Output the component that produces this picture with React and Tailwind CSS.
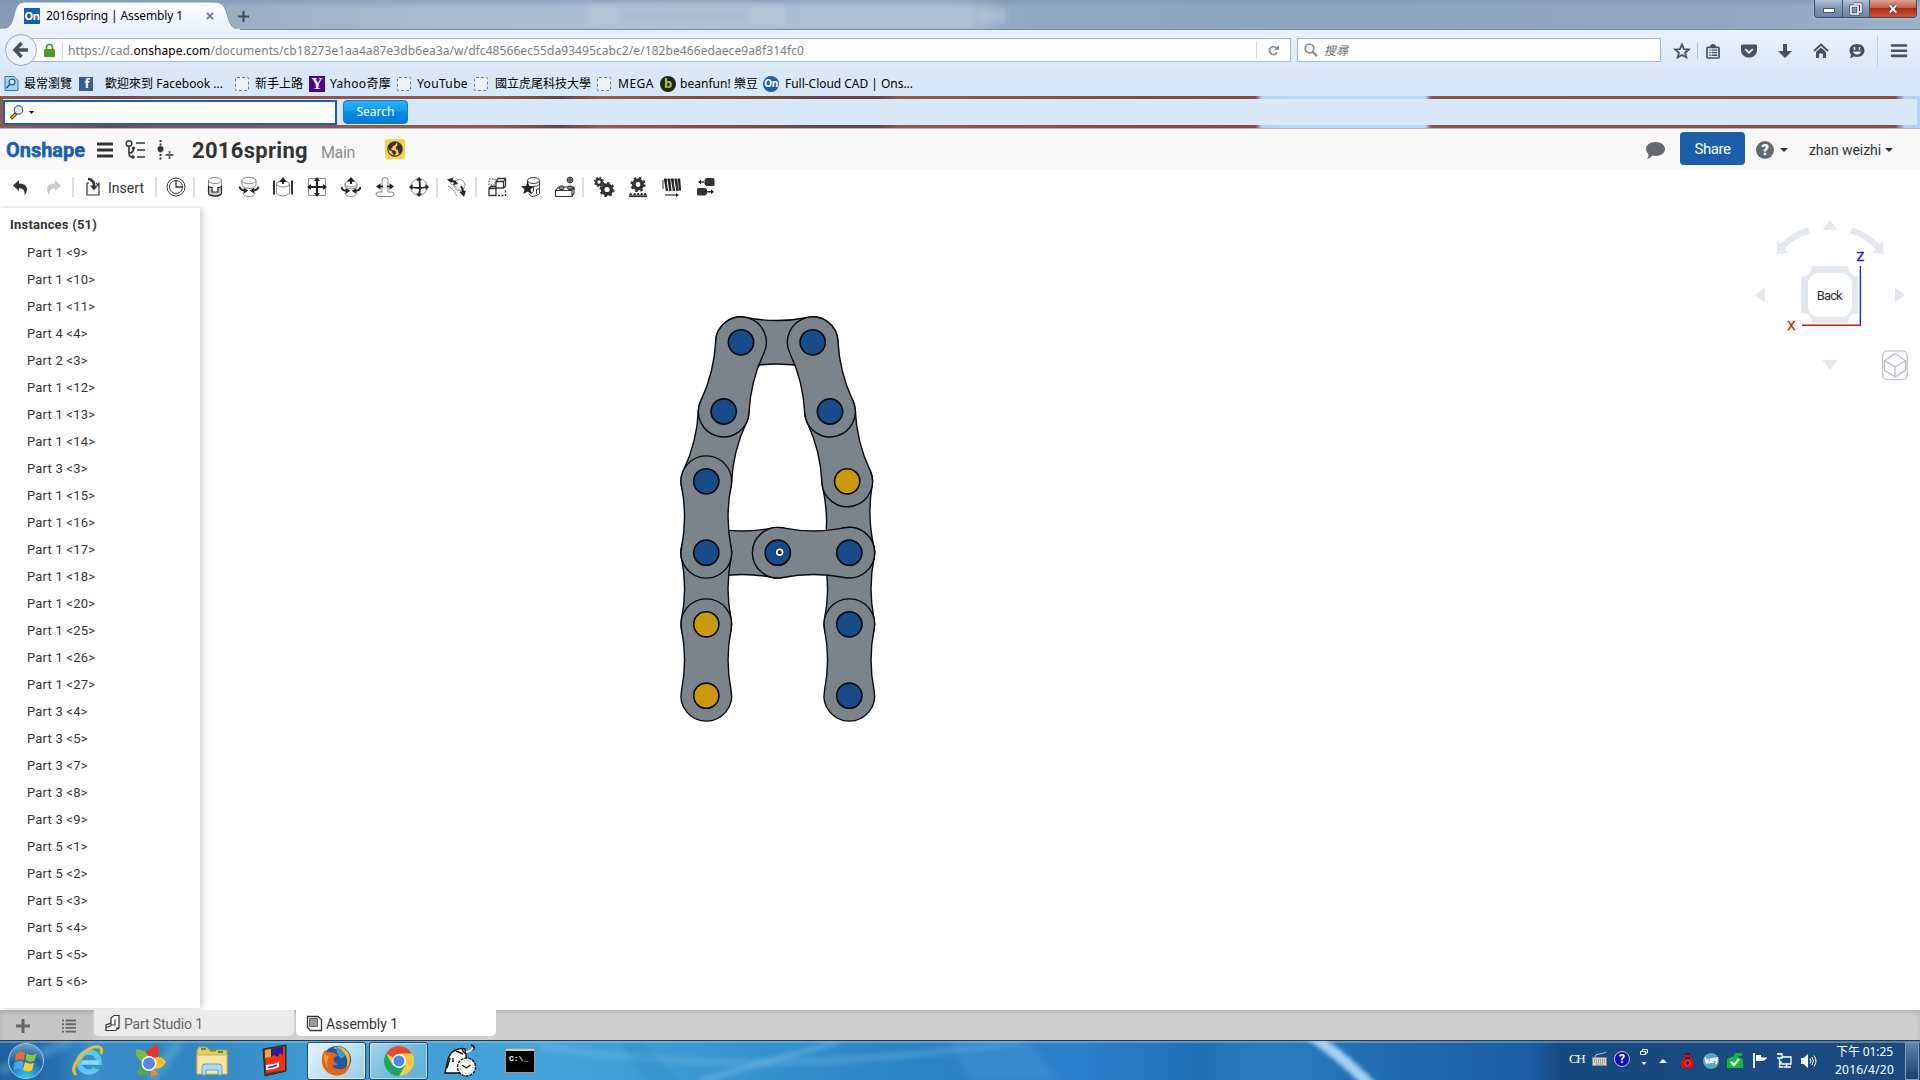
import React, { useLayoutEffect, useRef } from "react";

/* Text set to the width of its box by adjusting the tracking. */
function Fit({ children, className = "" }) {
  const box = useRef(null);
  const inner = useRef(null);
  useLayoutEffect(() => {
    const t = inner.current;
    t.style.letterSpacing = "0px";
    const natural = t.getBoundingClientRect().width;
    const target = box.current.getBoundingClientRect().width;
    t.style.letterSpacing = (target - natural) / Math.max(1, t.textContent.length) + "px";
  }, []);
  return (
    <span ref={box} className={"block shrink-0 whitespace-nowrap " + className}>
      <span ref={inner} className="inline-block">{children}</span>
    </span>
  );
}

const Ico = ({ children, className = "size-5", box = "0 0 20 20" }) => (
  <svg viewBox={box} className={"shrink-0 overflow-visible " + className} fill="none" stroke="#333" strokeWidth="1">
    {children}
  </svg>
);

const Caret = ({ className = "" }) => (
  <svg viewBox="0 0 8 4" className={"h-1 w-2 shrink-0 " + className}><path d="M0 0h8L4 4z" fill="#333" /></svg>
);

/* ---------- browser chrome ---------- */

function TabStrip() {
  return (
    <div className="relative flex h-[30px] w-full bg-[linear-gradient(90deg,#8599b5_0,#9aadc4_230px,#a9bbce_420px,#aebfd2_700px,#a9bcd0_970px,#93a8c2_1000px,#8ea5c0_1250px,#93a6bf_1700px,#9cb0c8_1920px)]">
      <div className="absolute inset-x-0 top-0 h-2 bg-gradient-to-b from-[#7d95b3]/60 to-transparent" />
      <div className="absolute left-[585px] top-1 h-6 w-[200px] rounded-t bg-[#b5c6d8]/60 blur-[2px]" />
      <div className="absolute left-[620px] top-2.5 h-3 w-[128px] bg-[#94a8bd]/30 blur-[4px]" />
      <div className="absolute left-[800px] top-1 h-6 w-[175px] rounded-t bg-[#b2c4d7]/40 blur-[2px]" />
      <div className="absolute left-[978px] top-2 h-4 w-7 bg-[#b9cbe0]/50 blur-[3px]" />
      <div className="absolute inset-x-0 bottom-0 h-px bg-[#6f8ba8]" />
      <svg viewBox="0 0 240 30" className="absolute left-0 top-0 h-[30px] w-[240px]">
        <defs>
          <linearGradient id="tabfill" x1="0" y1="0" x2="0" y2="1"><stop offset="0" stopColor="#fbfdff" /><stop offset="1" stopColor="#eaf2fc" /></linearGradient>
        </defs>
        <path d="M0 29C10 29 12 24 14.500 13C17 4 19 2 27 2H213C222 2 224 5 227 14C230 25 232 29.500 240 29.500V30H0z" fill="url(#tabfill)" stroke="#7d94ad" />
        <path d="M0 29.600H240" stroke="#eaf2fc" strokeWidth="1.500" />
      </svg>
      <div className="relative flex h-full items-center pt-[2px] [font-family:'Noto_Sans',sans-serif]">
        <div className="ml-6 flex size-4 items-center justify-center bg-[#1b5faa] text-[11px] font-bold tracking-tighter text-white">On</div>
        <Fit className="ml-1.5 w-[137px] text-[12px] text-black">2016spring | Assembly 1</Fit>
        <Ico className="ml-[23px] size-2" box="0 0 8 8"><path d="M1 1l6 6M7 1L1 7" stroke="#7b8794" strokeWidth="2.200" /></Ico>
        <Ico className="ml-[24px] size-[11px]" box="0 0 11 11"><path d="M5.500 0v11M0 5.500h11" stroke="#3f4a57" strokeWidth="2" /></Ico>
      </div>
      <div className="relative ml-auto mr-[3px] flex h-[18px] w-[103px] overflow-hidden rounded-b-[4px] border border-t-0 border-[#35455c] shadow-[0_0_2px_#e8f0f8]">
        <div className="flex w-[28px] items-end justify-center border-r border-[#44546b] bg-gradient-to-b from-[#b3c3d6] via-[#8296b1] to-[#6d86a5] pb-[4px]">
          <div className="h-[5px] w-[12px] border border-[#46566d] bg-white" />
        </div>
        <div className="flex w-[27px] items-center justify-center border-r border-[#44546b] bg-gradient-to-b from-[#b3c3d6] via-[#8296b1] to-[#6d86a5]">
          <Ico className="h-3 w-3" box="0 0 12 12"><path d="M4 1h7v8H9M1 3h7v8H1z" stroke="#3c4b61" strokeWidth="3" /><path d="M4 1h7v8H9M1 3h7v8H1z" stroke="#fff" strokeWidth="1.600" /></Ico>
        </div>
        <div className="flex flex-1 items-center justify-center bg-[linear-gradient(#dba295,#c55f49_45%,#ae2a12_50%,#d0583a)]">
          <Ico className="size-[10px]" box="0 0 11 11"><path d="M2 1.500l7 8M9 1.500l-7 8" stroke="#5e2c25" strokeWidth="4" /><path d="M2 1.500l7 8M9 1.500l-7 8" stroke="#fff" strokeWidth="2.400" /></Ico>
        </div>
      </div>
    </div>
  );
}

function NavBar() {
  const g = "#46525e";
  return (
    <div className="flex h-[40px] w-full items-center pt-[2px] [font-family:'Noto_Sans','Noto_Sans_CJK_TC',sans-serif]">
      <div className="z-10 -mt-[2px] ml-[5px] flex size-8 shrink-0 items-center justify-center rounded-full border border-[#94a9c0] bg-[#edf3fb]">
        <Ico className="size-4" box="0 0 16 16"><path d="M8.500 1L2 8l6.500 7M2.500 8H15" stroke="#46525e" strokeWidth="3.400" /></Ico>
      </div>
      <div className="-ml-[6px] -mt-[2px] flex h-6 w-[1260px] items-center border border-[#a5b9cd] bg-white">
        <Ico className="ml-[12px] h-[13px] w-[11px]" box="0 0 11 13"><rect x="0" y="5" width="11" height="8" rx="1" fill="#4b9b1f" stroke="none" /><path d="M2.500 6V3.500a3 3 0 016 0V6" stroke="#4b9b1f" strokeWidth="1.700" /></Ico>
        <div className="ml-[7px] h-[17px] w-px bg-[#d5d9de]" />
        <Fit className="ml-[5px] w-[736px] pt-[2px] text-[12px] text-[#7d7d7d]">https://cad.<span className="text-black">onshape.com</span>/documents/cb18273e1aa4a87e3db6ea3a/w/dfc48566ec55da93495cabc2/e/182be466edaece9a8f314fc0</Fit>
        <div className="ml-auto h-[18px] w-px bg-[#cfd6de]" />
        <Ico className="ml-[11px] mr-[11px] size-[11px]" box="0 0 11 11"><path d="M8.500 3A4 4 0 105.500 9.600 4 4 0 009 7.500" stroke="#8793a0" strokeWidth="1.800" /><path d="M11 0v5H6z" fill="#8793a0" stroke="none" /></Ico>
      </div>
      <div className="-mt-[2px] ml-[6px] flex h-6 w-[364px] items-center border border-[#a5b9cd] bg-white">
        <Ico className="ml-[6px] size-[14px]" box="0 0 14 14"><circle cx="5.500" cy="5.500" r="4.300" stroke="#909090" strokeWidth="1.800" /><path d="M8.800 8.800L13 13.300" stroke="#909090" strokeWidth="2.400" /></Ico>
        <Fit className="ml-[6px] w-[24px] pt-px text-[12px] italic text-[#6e6e6e]">搜尋</Fit>
      </div>
      <Ico className="ml-[13px] size-4" box="0 0 16 16"><path d="M8 1.500l2 4.600 4.800.4-3.700 3.200 1.200 4.800L8 12l-4.300 2.500 1.200-4.800L1.200 6.500 6 6.100z" stroke={g} strokeWidth="1.800" /></Ico>
      <div className="ml-[7px] h-4 w-px bg-[#b4c2d1]" />
      <Ico className="ml-[8px] h-[15px] w-[14px]" box="0 0 15 15"><rect x="1" y="3" width="13" height="11.500" rx="1" stroke={g} strokeWidth="1.800" /><path d="M4.500 3a3 3 0 016 0" fill={g} stroke={g} /><path d="M3.500 6h1.500M6 6h6M3.500 8.800h1.500M6 8.800h6M3.500 11.500h1.500M6 11.500h6" stroke={g} strokeWidth="1.400" /></Ico>
      <Ico className="ml-[21px] h-[14px] w-[16px]" box="0 0 17 14"><path d="M1.500 0h14Q17 0 17 1.500V6C17 11 13 14 8.500 14S0 11 0 6V1.500Q0 0 1.500 0z" fill={g} stroke="none" /><path d="M4.500 5l4 3.800 4-3.800" stroke="#e4edf8" strokeWidth="2" /></Ico>
      <Ico className="ml-[21px] h-[14px] w-[14px]" box="0 0 14 14"><path d="M5 0h4v7h5l-7 7-7-7h5z" fill={g} stroke="none" /></Ico>
      <Ico className="ml-[21px] size-4" box="0 0 16 16"><path d="M1 8l7-6.500L15 8" stroke={g} strokeWidth="2" /><path d="M3 9l5-4.600L13 9v6H9.800v-4.500H6.200V15H3z" fill={g} stroke="none" /></Ico>
      <Ico className="ml-[20px] size-4" box="0 0 16 16"><path d="M8 1c4.500 0 7.500 2.800 7.500 6.500S12.500 14 8 14c-1 0-2-.2-3-.5L1 15.500l1-4C1 10.500.5 9 .5 7.500.5 3.800 3.500 1 8 1z" fill={g} stroke="none" /><path d="M4 8.500h8c-.5 4-7.500 4-8 0z" fill="#e4edf8" stroke="none" /><path d="M5.500 4v3M10.500 4v3" stroke="#e4edf8" strokeWidth="1.500" /></Ico>
      <div className="ml-[12px] h-8 w-px bg-[#c3d0de]" />
      <Ico className="ml-[13px] h-[14px] w-4" box="0 0 16 14"><path d="M1 1.500h14M1 6.700h14M1 11.900h14" stroke={g} strokeWidth="2.600" strokeLinecap="round" /></Ico>
    </div>
  );
}

const Dashed = ({ className = "" }) => <div className={"h-[14px] w-[14px] shrink-0 rounded-[2px] border border-dashed border-[#777] bg-[#eef2f6] " + className} />;

function Bookmarks() {
  return (
    <div className="flex h-[26px] w-full items-center pt-px text-[12px] text-black [font-family:'Noto_Sans','Noto_Sans_CJK_TC',sans-serif]">
      <Ico className="ml-[4px] size-[15px]" box="0 0 15 15"><path d="M1 .5h9l4 4v10H1z" fill="#a7d1ec" stroke="#2f7cab" /><circle cx="8" cy="6" r="2.800" stroke="#225f8c" strokeWidth="1.300" fill="#e3f4ff" /><path d="M5.800 8.500L2.500 12" stroke="#225f8c" strokeWidth="1.800" /></Ico>
      <Fit className="ml-[5px] w-[48px]">最常瀏覽</Fit>
      <div className="ml-[7px] flex size-[14px] shrink-0 items-center justify-center bg-[#3b5a99] pl-[2px] text-[13px] font-bold leading-none text-white">f</div>
      <Fit className="ml-[12px] w-[118px]">歡迎來到 Facebook ...</Fit>
      <Dashed className="ml-[12px]" />
      <Fit className="ml-[6px] w-[48px]">新手上路</Fit>
      <div className="ml-[6px] flex size-4 shrink-0 items-center justify-center bg-[#4b0091] [font-family:'Liberation_Serif',serif] text-[16px] font-bold leading-4 text-white">Y</div>
      <Fit className="ml-[5px] w-[61px]">Yahoo奇摩</Fit>
      <Dashed className="ml-[6px]" />
      <Fit className="ml-[6px] w-[51px]">YouTube</Fit>
      <Dashed className="ml-[6px]" />
      <Fit className="ml-[7px] w-[96px]">國立虎尾科技大學</Fit>
      <Dashed className="ml-[6px]" />
      <Fit className="ml-[7px] w-[36px]">MEGA</Fit>
      <div className="ml-[6px] flex size-4 shrink-0 items-center justify-center rounded-full bg-[#20231a] text-[13px] font-bold leading-none text-[#a4d03a]">b</div>
      <Fit className="ml-[4px] w-[78px]">beanfun! 樂豆</Fit>
      <div className="ml-[5px] flex size-4 shrink-0 items-center justify-center rounded-full bg-[#1b5faa] text-[10px] font-bold tracking-tighter text-white">On</div>
      <Fit className="ml-[6px] w-[128px]">Full-Cloud CAD | Ons...</Fit>
    </div>
  );
}

function SearchBar() {
  return (
    <div className="h-[32px] w-full bg-[linear-gradient(90deg,#93584f_0,#8c544c_70px,#70443f_110px,#8d554d_160px,#93594f_500px,#6a403c_560px,#965c52_600px,#83493f_720px,#6a4441_820px,#6a4441_880px,#935a51_900px,#86473f_1200px,#844a43_1255px,#b5d5f5_1262px,#b9dafb_1425px,#8a5550_1431px,#87504a_1895px,#b5d2f0_1905px)] py-[3px] pl-[3px] pr-[3px]">
      <div className="flex h-[26px] items-center bg-[#d9e8f8]">
        <div className="flex h-[25px] w-[334px] items-center border-2 border-[#1d62a8] bg-white">
          <Ico className="ml-[5px] size-[14px]" box="0 0 14 14"><path d="M6 8.500L1 13.500" stroke="#2b2410" strokeWidth="3.400" /><path d="M5.500 9L1.500 13" stroke="#e3a72a" strokeWidth="1.800" /><circle cx="8.500" cy="5" r="4.300" fill="#cfeaf8" stroke="#333" /></Ico>
          <svg viewBox="0 0 5 3" className="ml-[5px] h-[3px] w-[5px]"><path d="M0 0h5L2.500 3z" /></svg>
        </div>
        <div className="ml-[6px] flex h-6 w-[65px] items-center justify-center rounded-[4px] border border-[#0c7bcb] bg-[linear-gradient(#2fb0fb,#0f9cf3_45%,#038ae6_50%,#037bd4)] text-white [font-family:'Noto_Sans',sans-serif]">
          <Fit className="w-[38px] text-[12px]">Search</Fit>
        </div>
      </div>
    </div>
  );
}

/* ---------- Onshape header ---------- */

function Header() {
  return (
    <div className="flex h-[41px] w-full items-center border-t border-[#a8bccd] bg-[#f9f9f9] pt-[2px] text-[#333] [font-family:Roboto,sans-serif]">
      <Fit className="-mt-px ml-[6px] w-[79px] text-[20px] font-bold text-[#1b5faa] [-webkit-text-stroke:0.5px_#1b5faa]">Onshape</Fit>
      <Ico className="ml-[12px] h-4 w-4" box="0 0 16 16"><path d="M0 2h16M0 8h16M0 14h16" strokeWidth="3" /></Ico>
      <Ico className="ml-[12px] h-5 w-5"><circle cx="4" cy="3.500" r="2.800" strokeWidth="1.500" /><path d="M4 6.500v7q0 3.500 3.500 3.500M4 13q4.500 0 4.500-4.500" strokeWidth="1.600" /><circle cx="8.500" cy="8" r="1.600" fill="#333" stroke="none" /><circle cx="8" cy="17" r="1.800" fill="#333" stroke="none" /><path d="M11 3h9M12 10h8M12 17h8" stroke="#5c6770" strokeWidth="1.900" /></Ico>
      <Ico className="ml-[12px] h-5 w-[17px]" box="0 0 17 20"><path d="M3.500 0v20" strokeWidth="2" strokeDasharray="2 1.500" /><circle cx="3.500" cy="9" r="3" fill="#333" stroke="none" /><path d="M8.500 15h8M12.500 11v8" stroke="#5c6770" strokeWidth="1.800" /></Ico>
      <Fit className="ml-[18px] w-[116px] text-[22px] font-bold">2016spring</Fit>
      <Fit className="ml-[13px] w-[34px] pt-[5px] text-[16px] text-[#8d8d8d]">Main</Fit>
      <div className="-mt-[3px] ml-[30px] flex size-5 shrink-0 items-center justify-center rounded-[3px] bg-[#ffd04a]">
        <Ico className="size-4" box="0 0 16 16"><circle cx="8" cy="8" r="7.200" fill="#ffd04a" stroke="#333" strokeWidth="1.200" /><path d="M1 7Q2 1.500 8 .8L9.500 2 8 4.500 6 5 5 7.500 3.500 7.500 5 9.300 7.500 9.300 9.300 11 7.800 14.600 6 13.500 5 10.500 2.500 9.300z" fill="#333" stroke="none" /><path d="M10 2l2.500.5 2.500 4-.3 4-1.700 2.500-1.500-.8-.5-3.200-2-.8-.2-2.200L10.500 4.500z" fill="#333" stroke="none" /></Ico>
      </div>
      <Ico className="ml-auto h-[17px] w-[19px]" box="0 0 19 17"><path d="M9.500 0C15 0 19 3 19 7s-4 7-9 7q-2 0-3.500-.4Q4 16.500 1 17q2-2.500 1.500-5Q0 10 0 7c0-4 4-7 9.500-7z" fill="#606a72" stroke="none" /></Ico>
      <div className="mb-[3px] ml-[15px] flex h-[33px] w-[65px] items-center justify-center rounded-[4px] bg-[#1b5faa] text-white"><Fit className="w-[36px] pt-px text-[15px]">Share</Fit></div>
      <div className="ml-[11px] flex size-[18px] items-center justify-center rounded-full bg-[#606a72] text-[15px] font-black text-white">?</div>
      <Caret className="ml-[6px]" />
      <Fit className="ml-[21px] w-[72px] text-[14px]">zhan weizhi</Fit>
      <Caret className="ml-[4px] mr-[27px]" />
    </div>
  );
}

const AR = "#222";
const icons = {
  fastened: <><ellipse cx="10" cy="3.500" rx="6.500" ry="3" stroke="#888" /><path d="M3.500 3.500v12.500q0 3 6.500 3.500 6.500-.5 6.500-3.500V3.500" stroke="#888" /><path d="M3.500 9.500q1.500 1 3.500 1v4.500h6v-4.500q2 0 3.500-1V16q0 2.500-6.500 3-6.500-.5-6.500-3z" fill="#ccc" stroke="#222" strokeWidth="1.200" /></>,
  revolute: <><ellipse cx="10" cy="3.500" rx="7" ry="3.200" stroke="#888" /><path d="M3 3.500v5q2 3 7 3t7-3v-5M4 15.500q0 4 6 4t6-4" stroke="#888" /><path d="M.8 9.500q-.5 3 4.500 4M19.200 9.500q.5 3-4.500 4" stroke={AR} strokeWidth="1.900" /><path d="M9.300 13.500l-4.500 3.300v-6zM10.700 13.500l4.500 3.300v-6z" fill={AR} stroke="none" /></>,
  slider: <><path d="M1 3.500v14M19 3.500v14" strokeWidth="2" /><ellipse cx="10" cy="7" rx="6.500" ry="3" stroke="#888" /><path d="M3.500 7v9.500q6.500 5 13 0V7" stroke="#888" /><path d="M10 7V3" strokeWidth="2" /><path d="M10 0l4 5H6z" fill={AR} stroke="none" /></>,
  planar: <><path d="M1.500 1.500h17v17h-17z" stroke="#888" /><path d="M10 3v14M3 10h14" stroke={AR} strokeWidth="2.200" /><path d="M10 0l3 4H7zM10 20l3-4H7zM0 10l4-3v6zM20 10l-4-3v6z" fill={AR} stroke="none" /></>,
  cylindrical: <><ellipse cx="10" cy="7" rx="6" ry="3" stroke="#888" /><path d="M4 7v3q6 4 12 0V7M4 15.500q0 4 6 4t6-4" stroke="#888" /><path d="M10 7V3M.8 10q-.5 3 4.500 3.800M19.200 10q.5 3-4.500 3.800" stroke={AR} strokeWidth="2" /><path d="M10 0l4 4.500H6zM9.300 13.800l-4.500 3.200v-6zM10.700 13.800l4.500 3.200v-6z" fill={AR} stroke="none" /></>,
  pinslot: <><path d="M7 15V3q0-2.500 3-2.500T13 3v12M7 15H4q-3 0-3 2t3 2.500h12q3-.5 3-2.500t-3-2h-3" stroke="#888" /><path d="M3 9.500h14" stroke={AR} strokeWidth="1.600" /><path d="M1 9.500l4.500-3.300v6.600zM19 9.500l-4.500-3.300v6.600z" fill={AR} stroke="none" /><path d="M8 9.500h4" stroke="#fff" strokeWidth="2" /></>,
  ball: <><circle cx="10" cy="10" r="8.300" stroke="#888" /><path d="M10 2q2 8 0 16M2 10q8 2 16 0" stroke={AR} strokeWidth="1.800" /><path d="M10 0l3 3.500H7zM10 20l3-3.500H7zM0 10l3.500-3v6zM20 10l-3.500-3v6z" fill={AR} stroke="none" /></>,
  tangent: <><path d="M1 9q6 3 9 10M3 6.500q8 3 12 10" stroke="#999" /><circle cx="12.500" cy="8" r="5.500" stroke="#999" /><path d="M3 3l5 2M14 9q2 3 2 6" stroke={AR} strokeWidth="2" /><path d="M0 2.500l6.500-2-2 5.500zM8 3l3 4-5 1zM17 20l-4.500-5 6.500-1.500z" fill={AR} stroke="none" /></>,
  group: <><path d="M2 2h6v6H2z" strokeDasharray="1.500 1.500" /><path d="M9 4.500l2-3h7.500V9l-2 2H9zM9 4.500h7.500V11M16.500 4.500l2-3M2 11.500L4 9.500h5v9H2zM2 11.500h6.500" strokeWidth="1.300" /><path d="M11 18.500h7.500V13" strokeDasharray="2 1.500" strokeWidth="1.400" /></>,
  connector: <><ellipse cx="12.500" cy="3.500" rx="6" ry="3" /><path d="M6.500 3.500V6M18.500 3.500v13q-3 3-7.500 3-3-1-3-3M12 9.500q4 0 6.500-2M12.500 10v4q0 2-3 2M18.500 12h-3v5" stroke="#444" /><path d="M6.500 4.500l2 4.500 5 .3-4 3.200 1.400 4.800-4.400-2.700-4.300 2.700 1.400-4.800L0 9.300 5 9z" fill="#222" stroke="none" /></>,
  relation: <><circle cx="15" cy="3" r="2.900" fill="#999" /><path d="M12 3h6M15 0v6" strokeWidth=".8" /><path d="M.5 13.500v6h16.500v-6H.500l3-3.500h15.500v6l-2 3.500M17 13.500l2-3.500" strokeWidth="1.100" /><ellipse cx="6.500" cy="10.800" rx="2.600" ry="1.900" fill="#888" /><ellipse cx="15" cy="10.800" rx="2.600" ry="1.900" fill="#888" /></>,
  gear: <><circle cx="5" cy="5" r="2.800" strokeWidth="2.300" /><circle cx="5" cy="5" r="4.300" strokeWidth="1.600" strokeDasharray="1.690 1.690" /><circle cx="13" cy="12.500" r="4.400" strokeWidth="3.600" /><circle cx="13" cy="12.500" r="6.600" strokeWidth="2" strokeDasharray="2.590 2.590" /></>,
  rack: <><circle cx="10" cy="7.500" r="4.200" strokeWidth="3.600" /><circle cx="10" cy="7.500" r="6.500" strokeWidth="2.200" strokeDasharray="2.552 2.552" /><path d="M1 19.200h18" strokeWidth="1.800" /><path d="M1.500 18l1.200-2 1.200 2M5.500 18l1.200-2 1.200 2M9 18l1.200-2 1.200 2M12.500 18l1.200-2 1.200 2M16 18l1.200-2 1.200 2" fill="#333" /></>,
  screw: <><path d="M3 1.500L5 14M6.500 1.500l2 12.500M10 1.500L12 14M13.500 1.500l2 12.500M17 1.500l1 12" stroke="#222" strokeWidth="2.300" /><path d="M1 3v9M4.500 2v12M8 2v12M11.500 2v12M15 2v12" strokeWidth="1" /><path d="M3 18h12" strokeWidth="1.200" /><path d="M17 18l-3-2v4z" fill="#222" stroke="none" /></>,
  linear: <><path d="M10 1h7q1.500 0 1.500 1.500v5.500q0 1-1.500 1H10L8.500 7V3zM2 11h7l2 1.500V17l-2 1.500H2Q1 18.500 1 17v-4.500Q1 11 2 11z" fill="#333" stroke="none" /><path d="M5 5h3M11 14.800h5" strokeWidth="1.400" /><path d="M2 5l3-2.400v4.800zM18 14.800l-3-2.400v4.800z" fill="#222" stroke="none" /></>,
};

const Sep = ({ className = "" }) => <div className={"h-5 w-[2px] shrink-0 bg-[#dedede] " + className} />;
const Tool = ({ name }) => <div className="flex w-[34px] shrink-0 justify-center"><Ico>{icons[name]}</Ico></div>;

function Toolbar() {
  return (
    <div className="flex h-[37px] w-full items-center bg-white pb-px text-[#333] [font-family:Roboto,sans-serif]">
      <Ico className="ml-[13px] h-[15px] w-[15px]" box="0 0 15 15"><path d="M0 5.500L6 0v3.500q8 0 8 6-.5 4-2.500 5.500 1-6.500-5.500-7V11z" fill="#333" stroke="none" /></Ico>
      <Ico className="ml-[18px] h-[15px] w-[15px]" box="0 0 15 15"><path d="M15 5.500L9 0v3.500q-8 0-8 6 .5 4 2.500 5.500-1-6.500 5.500-7V11z" fill="#ccc" stroke="none" /></Ico>
      <Sep className="ml-[11px]" />
      <Ico className="ml-[12px] h-[18px] w-[14px]" box="0 0 14 18"><path d="M3 5H1v12h12V5h-1M4.500 3.500h4M10 5l3 3" strokeWidth="1.200" /><path d="M2 1q6 0 6 7" strokeWidth="2.400" /><path d="M4 7.500h8l-4 5z" fill="#333" stroke="none" /></Ico>
      <Fit className="ml-[8px] w-[36px] pt-[3px] text-[14px]">Insert</Fit>
      <Sep className="ml-[11px]" />
      <Ico className="ml-[9px] size-5"><circle cx="10" cy="10" r="9" /><circle cx="10" cy="10" r="6.500" /><path d="M10 3.500V10h6.500" strokeWidth="1.300" /></Ico>
      <Sep className="ml-[7px]" />
      <div className="ml-[3px] flex">{["fastened", "revolute", "slider", "planar", "cylindrical", "pinslot", "ball"].map((n) => <Tool key={n} name={n} />)}</div>
      <Sep />
      <div className="ml-[2px]"><Tool name="tangent" /></div>
      <Sep className="ml-px" />
      <div className="ml-[3px] flex">{["group", "connector", "relation"].map((n) => <Tool key={n} name={n} />)}</div>
      <Sep />
      <div className="ml-[3px] flex">{["gear", "rack", "screw", "linear"].map((n) => <Tool key={n} name={n} />)}</div>
    </div>
  );
}

/* ---------- workspace ---------- */

const parts = ["1 <9>", "1 <10>", "1 <11>", "4 <4>", "2 <3>", "1 <12>", "1 <13>", "1 <14>", "3 <3>", "1 <15>", "1 <16>", "1 <17>", "1 <18>", "1 <20>", "1 <25>", "1 <26>", "1 <27>", "3 <4>", "3 <5>", "3 <7>", "3 <8>", "3 <9>", "5 <1>", "5 <2>", "5 <3>", "5 <4>", "5 <5>", "5 <6>"];

function Instances() {
  return (
    <div className="z-10 mt-[2px] h-[800px] w-[200px] shrink-0 bg-white text-[#333] shadow-[2px_0_8px_rgba(0,0,0,0.22)] [font-family:Roboto,sans-serif]">
      <div className="flex h-[31px] items-center pl-[10px] pt-[2px]"><Fit className="w-[87px] text-[13px] font-bold">Instances (51)</Fit></div>
      <ul>
        {parts.map((p) => (
          <li key={p} className="h-[27px] pl-[27px] text-[13px] leading-[27px] tracking-[0.2px]">Part {p}</li>
        ))}
      </ul>
    </div>
  );
}

const P = {
  a: [741, 342.3], b: [812.7, 342.3], c: [723.7, 411.5], d: [830, 411.5], e: [706.3, 481.3], f: [847.2, 481.3],
  g: [706.3, 552.7], h: [777.8, 552.7], i: [849.3, 552.7], j: [706.3, 624.3], k: [849.3, 624.3], l: [706.3, 695.7], m: [849.3, 695.7],
};
/* Lower links come first so the upper ones overlap their ends. */
const links = ["ab", "ce", "fi", "gh", "gj", "ik", "df", "ac", "bd", "eg", "hi", "jl", "km"];
const gold = "fjl";

function Link({ from, to }) {
  const dx = to[0] - from[0];
  const dy = to[1] - from[1];
  const len = Math.hypot(dx, dy);
  const ang = (Math.atan2(dy, dx) * 180) / Math.PI;
  const d = `M4.900 -24.800A25.300 25.300 0 1 0 4.900 24.800A159 159 0 0 1 ${len - 4.9} 24.800A25.300 25.300 0 1 0 ${len - 4.9} -24.800A159 159 0 0 1 4.900 -24.800Z`;
  return <path d={d} transform={`translate(${from[0]} ${from[1]}) rotate(${ang})`} fill="#7b838b" stroke="#0a0a0a" strokeWidth="1.400" />;
}

function Viewport() {
  return (
    <div className="flex flex-1 items-start justify-between bg-white">
      <svg viewBox="670 305 215 425" className="ml-[470px] mt-[99px] h-[425px] w-[215px]">
        {links.map((s) => <Link key={s} from={P[s[0]]} to={P[s[1]]} />)}
        {Object.keys(P).map((k) => (
          <circle key={k} cx={P[k][0]} cy={P[k][1]} r="12.600" fill={gold.includes(k) ? "#c9980c" : "#174c89"} stroke="#0a0a0a" strokeWidth="1.600" />
        ))}
        <circle cx="779.700" cy="552.300" r="2.900" fill="none" stroke="#222" strokeWidth="3.200" />
        <circle cx="779.700" cy="552.300" r="2.900" fill="#222" stroke="#fff" strokeWidth="1.800" />
      </svg>
      <svg viewBox="1750 210 170 180" className="mt-[4px] h-[180px] w-[170px]" fill="#e2e8ed">
        <path d="M1830 220l7.500 10h-15zM1830 370l7.500-10h-15zM1755 295l10-7.500v15zM1905 295l-10-7.500v15z" />
        <path d="M1809 230.500Q1793 235 1781.500 247.500M1851 230.500Q1867 235 1878.500 247.500" fill="none" stroke="#e2e8ed" strokeWidth="6" />
        <path d="M1776.700 254l.7-13.500 10.500 12.500zM1883.700 254l-.8-13.500-10.500 12.500z" />
        <path d="M1812 266.300h36q1 10 10.500 10.500v36q-10 .5-10.500 10.500h-36q-.5-10-10.500-10.500v-36q10-.5 10.500-10.500z" />
        <rect x="1808" y="273" width="44" height="44" rx="11" fill="#fff" />
        <path d="M1802 325.300h58.500" stroke="#d01818" strokeWidth="1.400" />
        <path d="M1860.400 266v59.500" stroke="#2222c8" strokeWidth="1.400" />
        <g className="[font-family:Roboto,sans-serif]" textAnchor="middle" fontSize="13">
          <text x="1829.700" y="300" fill="#333" textLength="26">Back</text>
          <text x="1860.300" y="261" fill="#2222c8" stroke="#2222c8" strokeWidth=".3">Z</text>
          <text x="1791.300" y="330" fill="#d01818" stroke="#d01818" strokeWidth=".3">X</text>
        </g>
        <g fill="#fff" stroke="#b4bcc4" strokeWidth="1.200">
          <rect x="1882.700" y="351" width="24.500" height="28.500" rx="4.500" />
          <path d="M1895 353.500l10.500 7.300v9.500l-10.500 6.500-10.500-6.500v-9.500zM1884.500 360.800l10.500 6.200 10.500-6.200M1895 367v9.500" />
        </g>
      </svg>
    </div>
  );
}

function DocTabs() {
  return (
    <div className="flex h-[30px] w-full shrink-0 bg-[#cfcfcf] shadow-[inset_0_3px_4px_rgba(0,0,0,0.12)] [font-family:Roboto,sans-serif]">
      <div className="flex w-[92px] items-center bg-black/[0.04] pt-[2px]">
        <Ico className="ml-[16px] size-[14px]" box="0 0 14 14"><path d="M7 0v14M0 7h14" stroke="#666" strokeWidth="3" /></Ico>
        <Ico className="ml-[32px] h-[14px] w-[14px]" box="0 0 14 14"><path d="M0 1.500h2M3.500 1.500H14M0 5.200h2M3.500 5.200H14M0 8.900h2M3.500 8.900H14M0 12.600h2M3.500 12.600H14" stroke="#666" strokeWidth="1.900" /></Ico>
      </div>
      <div className="ml-[2px] flex h-[26px] w-[200px] items-center rounded-b-[5px] bg-[#ebebeb]">
        <Ico className="ml-[11px] h-4 w-[15px]" box="0 0 15 16"><path d="M6 3l3-2.500h5V13l-3.500 2.500H1V10l5-2zM6 8v2.500L1 13M6 8V3M10 4.500V10H6M14 13h-3" strokeWidth="1.200" fill="#fff" /></Ico>
        <Fit className="ml-[4px] w-[79px] pt-[2px] text-[14px] text-[#666]">Part Studio 1</Fit>
      </div>
      <div className="ml-[2px] flex h-[26px] w-[200px] items-center rounded-b-[5px] bg-white">
        <Ico className="ml-[11px] h-[15px] w-[15px]" box="0 0 15 15"><path d="M.5.5h10.500l3.500 3V14.500h-11l-3-3z" fill="#fff" strokeWidth="1.300" /><path d="M2.500 2.500h8v8h-8z" fill="#999" stroke="#666" /></Ico>
        <Fit className="ml-[4px] w-[72px] pt-[2px] text-[14px] text-[#333]">Assembly 1</Fit>
      </div>
    </div>
  );
}

/* ---------- Windows taskbar ---------- */

const ChromeLogo = ({ className }) => (
  <Ico className={className} box="0 0 30 30">
    <g stroke="none">
      <circle cx="15" cy="15" r="15" fill="#fbc93d" />
      <path d="M15 15L2 7.500A15 15 0 0128 7.500H15z" fill="#dd4b3e" /><path d="M2 7.500A15 15 0 0015 30l6.500-11.300L8.500 18.700z" fill="#1da462" />
      <circle cx="15" cy="15" r="7" fill="#fff" /><circle cx="15" cy="15" r="5.500" fill="#4a8af4" />
    </g>
  </Ico>
);

function Taskbar() {
  return (
    <div className="relative flex h-10 w-full shrink-0 items-center overflow-hidden border-t border-[#1e3c5c] bg-[linear-gradient(90deg,#1f5f9e_0,#2470ae_55px,#3c8fc8_90px,#2f86c2_180px,#3f97d0_300px,#45a5da_540px,#3a98d0_700px,#2b84c4_900px,#2a80ca_1080px,#1f70b5_1200px,#2c7cc0_1270px,#1f69b0_1400px,#1b5da6_1530px,#174a82_1560px,#1b4a80_1920px)]">
      <svg viewBox="0 0 1920 40" className="absolute inset-0 h-10 w-full" fill="none">
        <path d="M1302 -12Q1342 14 1376 50" stroke="#a5d0f5" strokeWidth="11" className="blur-[2px]" />
        <path d="M700 40L840 0" stroke="#7cc0ea" strokeWidth="7" opacity=".35" className="blur-[2px]" />
        <path d="M540 5Q760 40 1020 0" stroke="#7cc0ea" strokeWidth="8" opacity=".25" className="blur-[2px]" />
        <path d="M620 0h20l40 40h-35z" fill="#1f80b8" opacity=".2" className="blur-[2px]" />
        <path d="M950 0h80l30 40h-90z" fill="#5aa5de" opacity=".25" className="blur-[3px]" />
        <path d="M0 30L70 0M150 40L180 0" stroke="#8ccbe0" strokeWidth="10" opacity=".3" className="blur-[3px]" />
        <path d="M0 1h1920" stroke="#a8cfe8" opacity=".8" />
      </svg>
      <div className="relative flex h-full w-full items-center">
        <div className="ml-[8px] flex size-9 shrink-0 items-center justify-center rounded-full border border-[#9dc9e8] bg-[radial-gradient(circle_at_50%_100%,#2fd0f5,#1e629f_55%,#8cb4d4_100%)]">
          <Ico className="h-[24px] w-[24px]" box="0 0 24 24"><g stroke="none"><path d="M2 5q5-4 9-1L10 11Q5 9 1 12z" fill="#f26a2a" /><path d="M12.500 4.500q5 3 10 0L20.500 12q-5 2-9-1z" fill="#8cc63e" /><path d="M.500 13.500q5-3 9-.5l-1.500 8q-4-3-8 0z" fill="#4aa6e8" /><path d="M11 13q4 3 9 1l-2 7.500q-5 2-9-.5z" fill="#fdc938" /></g></Ico>
        </div>
        <Ico className="ml-[28px] h-[32px] w-[32px]" box="0 0 32 32"><circle cx="17" cy="17" r="10" stroke="#5fc5f5" strokeWidth="5.500" /><path d="M10 17.500h17" stroke="#8ad8fa" strokeWidth="4.500" /><path d="M21 20h11v4h-9z" fill="#3a93cb" stroke="none" /><path d="M4 30Q-2 24 8 12T27 2Q31 3 29 9" stroke="#f2be25" strokeWidth="3" /></Ico>
        <Ico className="ml-[30px] h-[32px] w-[32px]" box="0 0 32 32"><g stroke="none"><path d="M13 17Q7 5 24 0q3 9-2 15z" fill="#e2382f" /><path d="M12 19Q0 14 2 4q13 1 14 13z" fill="#7bb93a" /><path d="M18 14q9-5 14 3-5 9-14 6z" fill="#f5c22c" /><path d="M14 17Q3 20 4 30q12 2 14-9z" fill="#59a63c" /><path d="M17 22l8 7-8 3z" fill="#ef8b27" /><circle cx="15" cy="18.500" r="7.500" fill="#fff" /><circle cx="15" cy="18.500" r="6" fill="#5b86f0" /></g></Ico>
        <Ico className="ml-[30px] h-[30px] w-[32px]" box="0 0 32 30"><path d="M1 4l2-3h8l2 3h18v24H1z" fill="#e8c767" stroke="#b9953a" /><path d="M5 3h5M14 4.500h6M22 6h5" stroke="#3a9a4c" strokeWidth="2" /><path d="M1 9h30v19H1z" fill="#f7e6a5" stroke="#cfae54" /><path d="M6 29v-8q0-3 3-3h14q3 0 3 3v8h-4v-5H10v5z" fill="#a9dcf2" stroke="#5aa9d0" /></Ico>
        <Ico className="ml-[34px] h-[31px] w-[26px]" box="0 0 26 31"><path d="M1 4L24 0v26L3 31z" fill="#493c32" stroke="#2c2420" /><path d="M3 5l20-3v23L4 28z" fill="#f4320f" stroke="none" /><path d="M3 5l6-1v8l-6 1z" fill="#f5a623" stroke="none" /><path d="M9 4l12-2v8l-3-2-2 4-4-2-3 2z" fill="#2c1d9c" stroke="none" /><path d="M4 20q7 0 13-3v5Q10 25 4 25z" fill="#fff" stroke="none" /><path d="M6 22.500q4 0 9-2.500" stroke="#2740b0" strokeWidth="1.500" /></Ico>
        <div className="ml-[19px] flex h-[38px] w-[59px] shrink-0 items-center justify-center rounded-[3px] border border-[#1d4567] bg-[linear-gradient(135deg,#e8f4fb,#b9dcf0_60%,#9ccfeb)] shadow-[inset_0_0_0_1px_#ffffffb0]">
          <Ico className="size-[31px]" box="0 0 31 31"><g stroke="none"><circle cx="16" cy="15" r="14" fill="#22599c" /><path d="M12 3q10-4 16 6 3 10-4 17Q30 12 20 6z" fill="#f6b929" /><path d="M4 5Q0 10 1 18q3 12 15 12.500Q28 30 29.500 16 26 25 18 24q-6 0-7-4 4 1 6-1-4-1-5-5 2-3 5-3-3-4-8-4Q6 8 4 5z" fill="#e3641c" /><path d="M3 8q-1 9 4 15-2-7 1-11z" fill="#f59a2a" /><path d="M15 2q5 1 9 7-1 5-5 4l-3-5z" fill="#3b9ad4" /></g></Ico>
        </div>
        <div className="ml-[3px] flex h-[38px] w-[59px] shrink-0 items-center justify-center rounded-[3px] border border-[#1d4567] bg-[linear-gradient(135deg,#a9d4ec,#6cb7df_60%,#5fb2dd)] shadow-[inset_0_0_0_1px_#ffffff80]">
          <ChromeLogo className="size-[30px]" />
        </div>
        <Ico className="ml-[16px] h-[32px] w-[32px]" box="0 0 32 32"><path d="M7 8q8-6 14-4l1 6 2 18H1L4 14z" fill="#fff" stroke="#111" strokeWidth="1.400" /><path d="M18 4q2 6 6 3l6-3q1-3-3-4M6 13l-3 10M9 13v4M12 6l7 3" stroke="#111" strokeWidth="1.400" /><path d="M29 3q-3 4-7 4" stroke="#fff" strokeWidth="2" /><circle cx="22.500" cy="22" r="9" fill="#fff" stroke="#111" strokeWidth="1.400" strokeDasharray="3 1" /><circle cx="22.500" cy="22" r="6.500" stroke="#777" strokeDasharray="1 2.400" /><path d="M18 20l4.500 3 4-3" stroke="#111" strokeWidth="1.300" /></Ico>
        <div className="ml-[29px] flex h-[25px] w-[30px] shrink-0 flex-col border border-[#999] bg-black shadow-[inset_0_2px_0_#c9c9c9]">
          <span className="pl-[3px] pt-[5px] text-[8px] font-bold leading-[9px] text-white [font-family:'Liberation_Mono',monospace]">C:\_</span>
        </div>

        <Fit className="mb-[4px] ml-auto w-[15px] text-[13px] text-white [font-family:'Liberation_Serif',serif]">CH</Fit>
        <Ico className="mb-[4px] ml-[8px] h-[14px] w-[15px]" box="0 0 15 14"><path d="M3 5q0-3 4-3t7-2" stroke="#c8c8c8" /><rect x=".5" y="5.500" width="14" height="8" fill="#d9d5cc" stroke="#8e8a80" /><path d="M2 8h11M2 10h11M4 12h7" stroke="#666" strokeDasharray="1 1" /></Ico>
        <div className="mb-[4px] ml-[7px] flex size-[16px] items-center justify-center rounded-full border border-[#b8c4e0] bg-[#1212a8] text-[12px] font-bold text-white [font-family:Roboto,sans-serif]">?</div>
        <Ico className="mb-[7px] ml-[10px] h-4 w-[8px]" box="0 0 8 16"><path d="M2.500 2.500v-2h5v3.500h-2M.5 2.500h5v3h-5z" stroke="#fff" /><path d="M1.500 13h5L4 16z" fill="#fff" stroke="none" /></Ico>
        <Ico className="ml-[11px] h-[4px] w-[8px]" box="0 0 8 4"><path d="M0 4h8L4 0z" fill="#fff" stroke="none" /></Ico>
        <Ico className="ml-[14px] h-[15px] w-[13px]" box="0 0 13 15"><path d="M4 0h5v4q4 3 4 7 0 4-3 4H3q-3 0-3-4 0-4 4-7z" fill="#d01515" stroke="none" /><path d="M4 1h5M4 5h5" stroke="#4d0b0b" strokeWidth="1.500" /><circle cx="6.500" cy="10" r="2.500" fill="#701010" stroke="#f77" strokeWidth=".7" /></Ico>
        <div className="ml-[9px] flex size-[16px] items-center justify-center rounded-full bg-[#5ba4bd] text-[9px] font-black tracking-tighter text-white [font-family:Roboto,sans-serif]"><span className="-rotate-12">key</span></div>
        <Ico className="ml-[8px] h-[15px] w-[16px]" box="0 0 16 15"><path d="M0 6l7-3 1-3h7v3h-4v1l5 2v9H0z" fill="#11b93d" stroke="none" /><path d="M4 9l3 3 5-6" stroke="#fff" strokeWidth="2.200" /></Ico>
        <Ico className="ml-[10px] h-[15px] w-[14px]" box="0 0 14 15"><path d="M1 0v15" stroke="#fff" strokeWidth="1.700" /><path d="M3 2h5v2q3 1 6 0-1 4-6 4H3z" fill="#fff" stroke="none" /></Ico>
        <Ico className="ml-[10px] h-[15px] w-[15px]" box="0 0 15 15"><path d="M5 4h9v7H4V8M7 14h7M9.500 11v3M0 1h5v4H0M2.500 5v9h4M1 0v2M4 0v2" stroke="#fff" strokeWidth="1.300" /></Ico>
        <Ico className="ml-[9px] h-[14px] w-[15px]" box="0 0 15 14"><path d="M0 4h2.500L7 0v14l-4.500-4H0z" fill="#fff" stroke="none" /><path d="M9 4.500q2 2.500 0 5M11 3q3 4 0 8M13 1.500q4 5.500 0 11" stroke="#fff" /></Ico>
        <div className="ml-[19px] flex w-[59px] flex-col items-center text-[12px] leading-[18px] text-white [font-family:'Noto_Sans','Noto_Sans_CJK_TC',sans-serif]">
          <Fit className="h-[18px] w-[57px]">下午 01:25</Fit>
          <Fit className="h-[18px] w-[59px]">2016/4/20</Fit>
        </div>
        <div className="ml-[11px] mr-[1px] h-[38px] w-[14px] shrink-0 border border-[#7f9dbd] bg-gradient-to-b from-[#5f83a9] to-[#1c4168]" />
      </div>
    </div>
  );
}

export default function App() {
  return (
    <div className="flex h-[1080px] w-[1920px] flex-col overflow-hidden bg-white">
      <div className="flex h-[96px] shrink-0 flex-col bg-[linear-gradient(#eaf2fc_30px,#d9e8f8_70px)]">
        <TabStrip />
        <NavBar />
        <Bookmarks />
      </div>
      <div className="shrink-0">
        <SearchBar />
        <Header />
        <Toolbar />
      </div>
      <div className="flex h-[804px] shrink-0 overflow-hidden">
        <Instances />
        <Viewport />
      </div>
      <DocTabs />
      <Taskbar />
    </div>
  );
}
